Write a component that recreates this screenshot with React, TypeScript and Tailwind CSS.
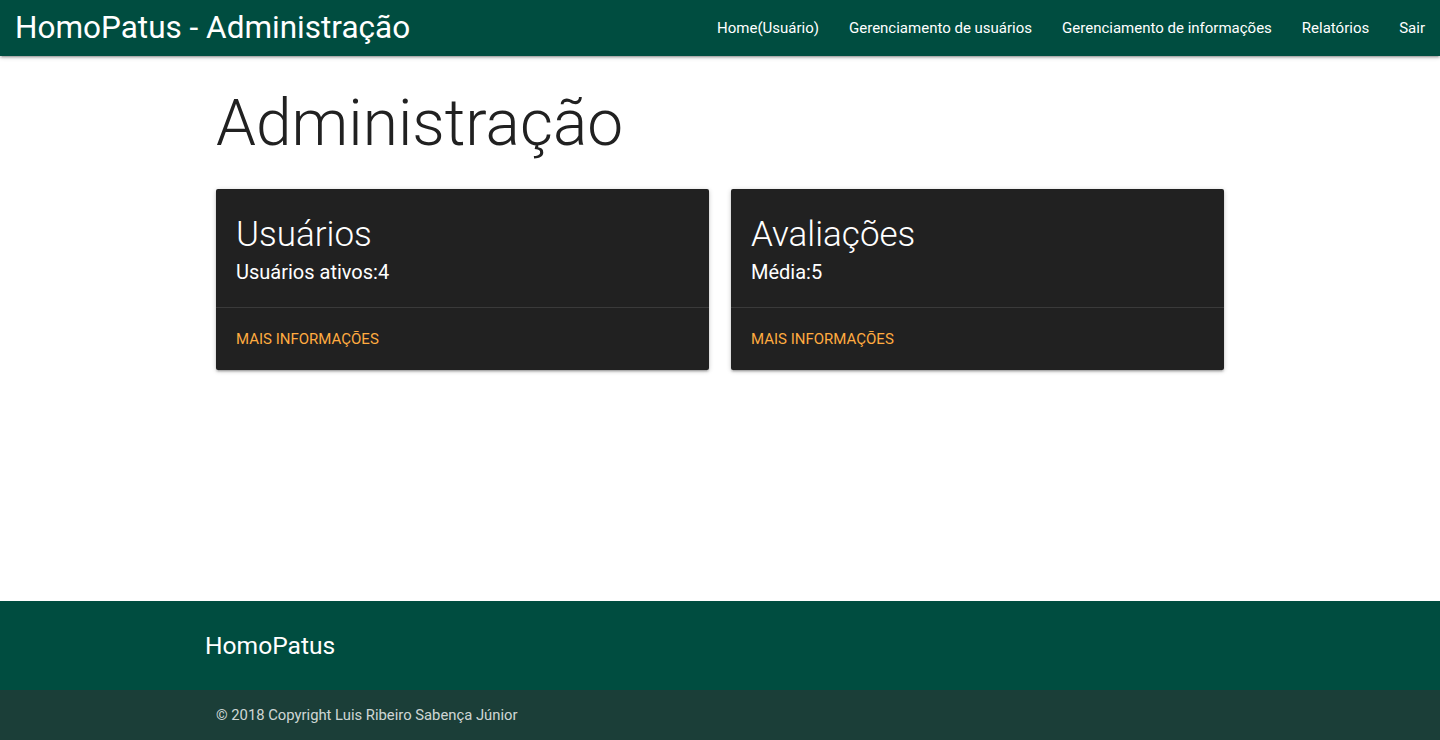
import React from 'react';

const navLinks = ['Home(Usuário)', 'Gerenciamento de usuários', 'Gerenciamento de informações', 'Relatórios', 'Sair'];

const cards = [
  { title: 'Usuários', info: 'Usuários ativos:4' },
  { title: 'Avaliações', info: 'Média:5' },
];

const App: React.FC = () => {
  return (
    <div className="min-h-screen flex flex-col bg-white font-['Roboto',sans-serif] text-[15px] text-[rgba(0,0,0,0.87)]">
      {/* top nav */}
      <nav className="h-[56px] bg-[#004d40] text-white flex items-center justify-between shadow-[0_2px_2px_0_rgba(0,0,0,0.14),0_3px_1px_-2px_rgba(0,0,0,0.12),0_1px_5px_0_rgba(0,0,0,0.2)] relative z-10">
        <a className="pl-[15px] text-[31.5px] leading-[56px]">HomoPatus - Administração</a>
        <ul className="flex h-full">
          {navLinks.map((l) => (
            <li key={l}>
              <a className="block px-[15px] leading-[56px] text-[15px]">{l}</a>
            </li>
          ))}
        </ul>
      </nav>

      <main className="flex-1">
        <div className="w-[1008px] mx-auto">
          <h1 className="text-[64px] font-light leading-[67px] mt-[34px] mb-[32px] text-[#212121]">Administração</h1>
          <div className="grid grid-cols-2 gap-[22px]">
            {cards.map((c) => (
              <div key={c.title} className="bg-[#212121] rounded-[2px] shadow-[0_2px_2px_0_rgba(0,0,0,0.14),0_3px_1px_-2px_rgba(0,0,0,0.12),0_1px_5px_0_rgba(0,0,0,0.2)]">
                <div className="h-[118px] px-[20px] pt-[26px] text-white">
                  <h4 className="text-[35px] font-light leading-[40px]">{c.title}</h4>
                  <p className="text-[20px] leading-[30px] mt-[2px]">{c.info}</p>
                </div>
                <div className="border-t border-[rgba(160,160,160,0.2)] h-[63px] px-[20px] flex items-center">
                  <a className="uppercase text-[15px] text-[#ffab40]">Mais informações</a>
                </div>
              </div>
            ))}
          </div>
        </div>
      </main>

      <footer className="text-white">
        <div className="bg-[#004d40] h-[89px] flex items-center">
          <h5 className="pl-[205px] text-[24.6px] pt-[2px]">HomoPatus</h5>
        </div>
        <div className="bg-[#1b3e38] h-[50px] flex items-center">
          <span className="pl-[216px] text-[14.8px] text-[rgba(255,255,255,0.8)]">© 2018 Copyright Luis Ribeiro Sabença Júnior</span>
        </div>
      </footer>
    </div>
  );
};

export default App;
